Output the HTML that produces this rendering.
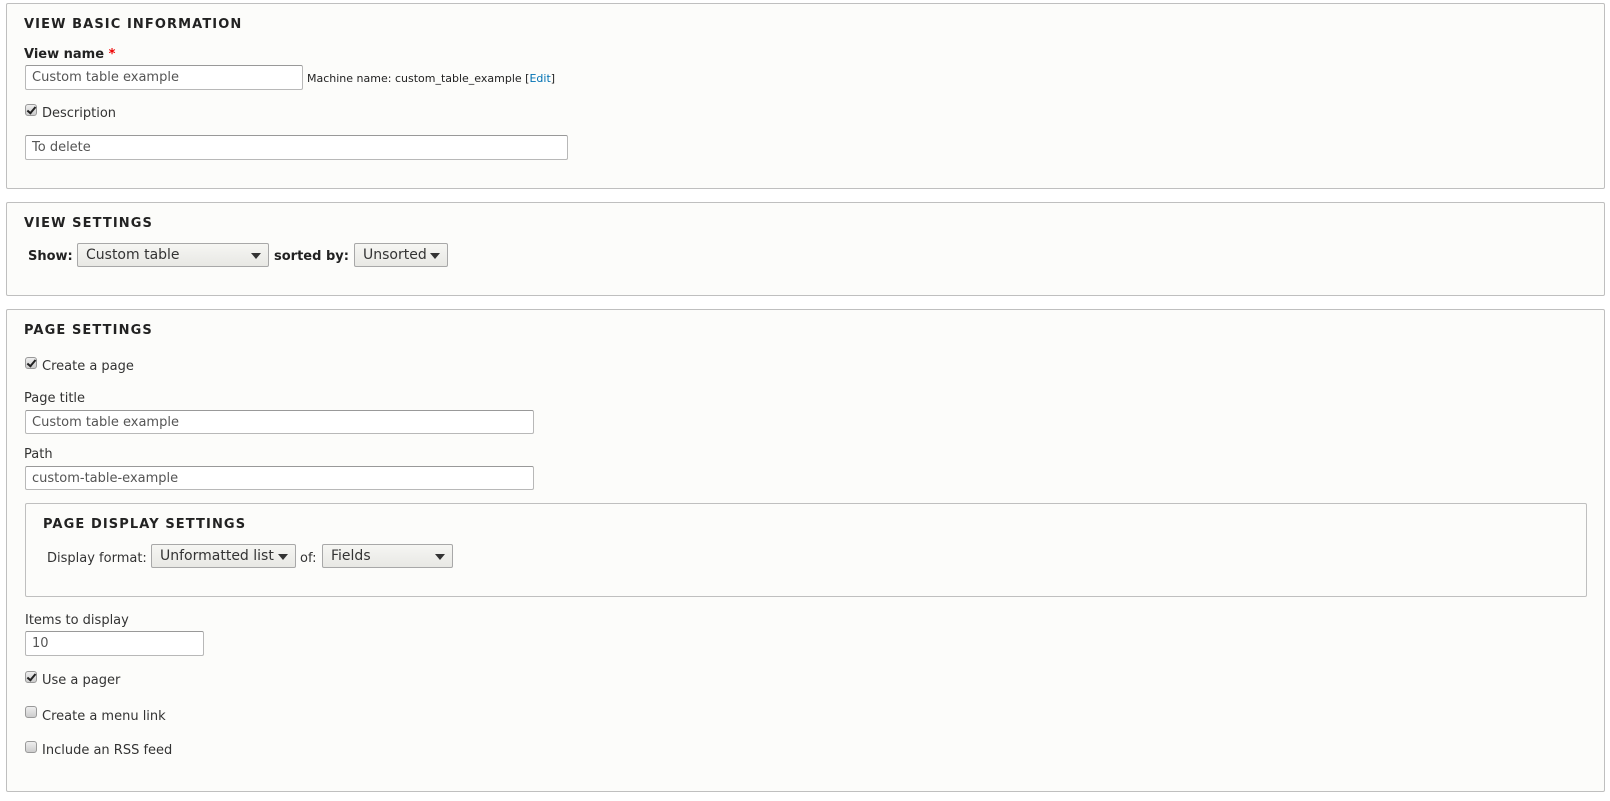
<!DOCTYPE html>
<html><head><style>
*{box-sizing:border-box;margin:0;padding:0}
body{width:1610px;height:801px;background:#fff;font-family:"DejaVu Sans","Liberation Sans",sans-serif;font-size:13px;color:#333;position:relative;overflow:hidden}
.box{position:absolute;border:1px solid #bfbfbf;background:#fcfcfa;border-radius:2px}
.t{position:absolute;font-weight:bold;font-size:13px;letter-spacing:1.1px;color:#222;line-height:16px}
.lbl{position:absolute;line-height:16px;white-space:nowrap}
.in{position:absolute;border:1px solid #b8b8b8;border-top-color:#999;background:#fff;border-radius:2px;padding-left:6px;padding-top:2px;color:#555;line-height:20px;font-size:13px}
.sel{position:absolute;border:1px solid #a8a8a8;background:linear-gradient(#f6f6f3,#e8e8e4);border-radius:2px;padding-left:8px;font-size:14px;color:#333;line-height:23px;white-space:nowrap}
.sel:after{content:"";position:absolute;right:7px;top:9px;border-left:5px solid transparent;border-right:5px solid transparent;border-top:6px solid #333}
.cb{position:absolute;width:12px;height:12px;border:1px solid #999;border-radius:3px;background:linear-gradient(#eee,#ccc)}
.cb.on:after{content:"";position:absolute;left:3px;top:0px;width:3px;height:7px;border:solid #222;border-width:0 2px 2px 0;transform:rotate(40deg)}
</style></head><body>

<div class="box" style="left:6px;top:3px;width:1599px;height:186px"></div>
<div class="t" style="left:24px;top:17px">VIEW BASIC INFORMATION</div>
<div class="lbl" style="left:24px;top:47px;font-weight:bold;color:#222">View name <span style="color:#e00">*</span></div>
<div class="in" style="left:25px;top:65px;width:278px;height:25px">Custom table example</div>
<div class="lbl" style="left:307px;top:71px;font-size:11px;color:#222">Machine name: custom_table_example [<span style="color:#0071b3">Edit</span>]</div>
<div class="cb on" style="left:25px;top:104px"></div>
<div class="lbl" style="left:42px;top:106px">Description</div>
<div class="in" style="left:25px;top:135px;width:543px;height:25px">To delete</div>

<div class="box" style="left:6px;top:202px;width:1599px;height:94px"></div>
<div class="t" style="left:24px;top:216px">VIEW SETTINGS</div>
<div class="lbl" style="left:28px;top:249px;font-weight:bold;color:#222">Show:</div>
<div class="sel" style="left:77px;top:243px;width:192px;height:24px">Custom table</div>
<div class="lbl" style="left:274px;top:249px;font-weight:bold;color:#222">sorted by:</div>
<div class="sel" style="left:354px;top:243px;width:94px;height:24px">Unsorted</div>

<div class="box" style="left:6px;top:309px;width:1599px;height:483px"></div>
<div class="t" style="left:24px;top:323px">PAGE SETTINGS</div>
<div class="cb on" style="left:25px;top:357px"></div>
<div class="lbl" style="left:42px;top:359px">Create a page</div>
<div class="lbl" style="left:24px;top:391px">Page title</div>
<div class="in" style="left:25px;top:410px;width:509px;height:24px">Custom table example</div>
<div class="lbl" style="left:24px;top:447px">Path</div>
<div class="in" style="left:25px;top:466px;width:509px;height:24px">custom-table-example</div>

<div class="box" style="left:25px;top:503px;width:1562px;height:94px"></div>
<div class="t" style="left:43px;top:517px">PAGE DISPLAY SETTINGS</div>
<div class="lbl" style="left:47px;top:551px">Display format:</div>
<div class="sel" style="left:151px;top:544px;width:145px;height:24px">Unformatted list</div>
<div class="lbl" style="left:300px;top:551px">of:</div>
<div class="sel" style="left:322px;top:544px;width:131px;height:24px">Fields</div>

<div class="lbl" style="left:25px;top:613px">Items to display</div>
<div class="in" style="left:25px;top:631px;width:179px;height:25px">10</div>
<div class="cb on" style="left:25px;top:671px"></div>
<div class="lbl" style="left:42px;top:673px">Use a pager</div>
<div class="cb" style="left:25px;top:706px"></div>
<div class="lbl" style="left:42px;top:709px">Create a menu link</div>
<div class="cb" style="left:25px;top:741px"></div>
<div class="lbl" style="left:42px;top:743px">Include an RSS feed</div>
</body></html>
